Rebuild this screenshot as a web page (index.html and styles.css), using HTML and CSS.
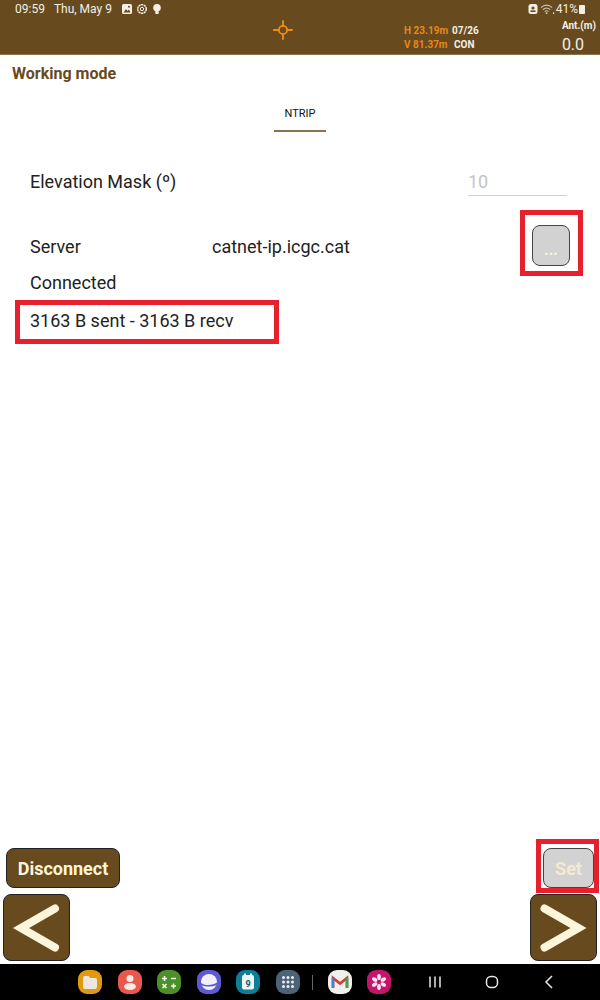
FILE: index.html
```html
<!DOCTYPE html>
<html lang="en">
<head>
    <meta charset="UTF-8">
    <title>Working mode</title>
    <link rel="stylesheet" href="styles.css">
</head>
<body>
    <!-- Top bar with status icons and position info -->
    <div class="top-bar">
        <div class="status-row">
            <span class="clock">09:59</span>
            <span class="date">Thu, May 9</span>
            <svg class="status-icon" viewBox="0 0 12 12"><rect x="1" y="1" width="10" height="10" rx="1.5" fill="#f4efe6"/><path d="M2.5 9.5 L5 6 L6.5 8 L8 6.5 L9.5 9.5Z" fill="#674a1e"/><circle cx="8" cy="3.8" r="1" fill="#674a1e"/></svg>
            <svg class="status-icon" viewBox="0 0 12 12"><circle cx="6" cy="6" r="4.300" fill="none" stroke="#f4efe6" stroke-width="1.500" stroke-dasharray="2.200 .5"/><circle cx="6" cy="6" r="1.700" fill="none" stroke="#f4efe6"/></svg>
            <svg class="status-icon" viewBox="0 0 12 12"><circle cx="6" cy="4.800" r="3.800" fill="#f4efe6"/><rect x="4.300" y="8" width="3.400" height="3" rx=".8" fill="#f4efe6"/></svg>
            <span class="status-right">
                <svg class="status-icon" viewBox="0 0 12 12"><rect x="1.500" y="1" width="9" height="10" rx="2.500" fill="#f4efe6"/><circle cx="6" cy="5" r="1.600" fill="#674a1e"/><rect x="3.500" y="7.400" width="5" height="1.600" fill="#674a1e"/></svg>
                <svg class="wifi-icon" viewBox="0 0 16 12"><path d="M1 4.500 C4.500 1 9.500 1 13 4.500 M3 6.700 C5.500 4.400 8.500 4.400 11 6.700 M5 8.800 C6.300 7.700 7.700 7.700 9 8.800" fill="none" stroke="#cfc5b4" stroke-width="1.100"/><circle cx="7" cy="10.400" r="1" fill="#cfc5b4"/><circle cx="14.500" cy="10.400" r=".8" fill="#f4efe6"/></svg>
                <span class="battery-text">41%</span>
                <span class="battery"></span>
            </span>
        </div>
        <div class="info-row">
            <svg class="crosshair" viewBox="0 0 22 22"><circle cx="11" cy="11" r="4.500" fill="none" stroke="#f08c12" stroke-width="2"/><path d="M11 1V6.500M11 15.500V21M1 11H6.500M15.500 11H21" stroke="#f08c12" stroke-width="2" stroke-linecap="round"/></svg>
            <div class="fix-info">
                <div class="fix-line"><span class="fix-value">H 23.19m</span><span class="fix-sats">07/26</span></div>
                <div class="fix-line"><span class="fix-value">V 81.37m</span><span class="fix-con">CON</span></div>
            </div>
            <div class="antenna">
                <div class="antenna-label">Ant.(m)</div>
                <div class="antenna-value">0.0</div>
            </div>
        </div>
    </div>

    <!-- Main content -->
    <div class="content">
        <h1 class="page-title">Working mode</h1>
        <div class="tabs"><div class="tab">NTRIP</div></div>

        <div class="row elevation-row">
            <span class="label">Elevation Mask (º)</span>
            <div class="field">10</div>
        </div>
        <div class="row server-row">
            <span class="label server-label">Server</span>
            <span class="label">catnet-ip.icgc.cat</span>
            <div class="marked marked-server"><button class="btn-grey btn-dots">...</button></div>
        </div>
        <div class="label connected">Connected</div>
        <div class="marked marked-bytes"><span class="label">3163 B sent - 3163 B recv</span></div>
    </div>

    <!-- Bottom buttons -->
    <div class="actions">
        <button class="btn-brown btn-disconnect">Disconnect</button>
        <div class="marked marked-set"><button class="btn-grey btn-set">Set</button></div>
    </div>
    <div class="arrows">
        <button class="btn-brown btn-arrow"><svg viewBox="0 0 64 64"><path d="M51 12.500 L17 32 L51 51.500" fill="none" stroke="#fdf5d9" stroke-width="8" stroke-linecap="round"/></svg></button>
        <button class="btn-brown btn-arrow"><svg viewBox="0 0 64 64"><path d="M13.500 12.500 L47.500 32 L13.500 51.500" fill="none" stroke="#fdf5d9" stroke-width="8" stroke-linecap="round"/></svg></button>
    </div>

    <!-- Android navigation bar -->
    <div class="nav-bar">
        <div class="dock">
            <svg class="app" viewBox="0 0 24 24"><rect width="24" height="24" rx="9" fill="#e09a12"/><path d="M5 8a2 2 0 0 1 2-2h3.500l2 2H17a2 2 0 0 1 2 2v7a2 2 0 0 1-2 2H7a2 2 0 0 1-2-2Z" fill="#ece8e0"/></svg>
            <svg class="app" viewBox="0 0 24 24"><rect width="24" height="24" rx="9" fill="#e8584c"/><circle cx="12" cy="8.500" r="3.500" fill="#fbe9e6"/><ellipse cx="12" cy="16.500" rx="6" ry="3.500" fill="#fbe9e6"/></svg>
            <svg class="app" viewBox="0 0 24 24"><rect width="24" height="24" rx="9" fill="#4b9128"/><path d="M5 8.500h5M7.500 6v5M14 8.500h5M5.500 14l4 4M9.500 14l-4 4M14 16h5M16.500 13.500v5" stroke="#f2f5ee" stroke-width="1.600" fill="none"/></svg>
            <svg class="app" viewBox="0 0 24 24"><rect width="24" height="24" rx="9" fill="#5f5bcf"/><circle cx="12" cy="12" r="8" fill="#f2f1fb"/><path d="M3 12.500c5 3.500 12 3.500 18-.5-.5 1.500-1 2.500-1.500 3.200-5 2-11 1.800-15.500-.2Z" fill="#5f5bcf"/></svg>
            <svg class="app" viewBox="0 0 24 24"><rect width="24" height="24" rx="9" fill="#0e7f96"/><rect x="6" y="5" width="12" height="14.500" rx="2" fill="#eef6f7"/><rect x="8" y="3.500" width="2" height="3" fill="#eef6f7"/><rect x="14" y="3.500" width="2" height="3" fill="#eef6f7"/><text x="12" y="16.500" class="cal-day" text-anchor="middle">9</text></svg>
            <svg class="app" viewBox="0 0 24 24"><rect width="24" height="24" rx="9" fill="#4c6276"/><g fill="#eef1f4"><circle cx="7.500" cy="7.500" r="1.500"/><circle cx="12" cy="7.500" r="1.500"/><circle cx="16.500" cy="7.500" r="1.500"/><circle cx="7.500" cy="12" r="1.500"/><circle cx="12" cy="12" r="1.500"/><circle cx="16.500" cy="12" r="1.500"/><circle cx="7.500" cy="16.500" r="1.500"/><circle cx="12" cy="16.500" r="1.500"/><circle cx="16.500" cy="16.500" r="1.500"/></g></svg>
            <span class="dock-divider"></span>
            <svg class="app" viewBox="0 0 24 24"><rect width="24" height="24" rx="9" fill="#efefec"/><path d="M5 18V8l7 5.500L19 8v10" fill="none" stroke="#d93a2f" stroke-width="2.600"/><path d="M5 18V8" stroke="#3f7fe0" stroke-width="2.600"/><path d="M19 18V8" stroke="#3aa655" stroke-width="2.600"/></svg>
            <svg class="app" viewBox="0 0 24 24"><rect width="24" height="24" rx="9" fill="#c3156b"/><g fill="#fbe6f0"><ellipse cx="12" cy="7" rx="1.900" ry="3"/><ellipse cx="12" cy="17" rx="1.900" ry="3"/><ellipse cx="7.700" cy="9.500" rx="1.900" ry="3" transform="rotate(-60 7.700 9.500)"/><ellipse cx="16.300" cy="9.500" rx="1.900" ry="3" transform="rotate(60 16.300 9.500)"/><ellipse cx="7.700" cy="14.500" rx="1.900" ry="3" transform="rotate(60 7.700 14.500)"/><ellipse cx="16.300" cy="14.500" rx="1.900" ry="3" transform="rotate(-60 16.300 14.500)"/></g></svg>
        </div>
        <div class="soft-keys">
            <svg class="soft-key" viewBox="0 0 16 16"><path d="M3 2.500V13.500M8 2.500V13.500M13 2.500V13.500" stroke="#e8e8e8" stroke-width="1.500"/></svg>
            <svg class="soft-key" viewBox="0 0 16 16"><rect x="2.500" y="2.500" width="11" height="11" rx="4.500" fill="none" stroke="#e8e8e8" stroke-width="1.500"/></svg>
            <svg class="soft-key" viewBox="0 0 16 16"><path d="M11 2 L5 8 L11 14" fill="none" stroke="#e8e8e8" stroke-width="1.500"/></svg>
        </div>
    </div>
</body>
</html>
```

FILE: styles.css
```css
/* Basic reset */
* {
    margin: 0;
    padding: 0;
    box-sizing: border-box;
}

html, body {
    height: 100%;
    overflow: hidden;
}

body {
    display: flex;
    flex-direction: column;
    background-color: #fff;
    font-family: Roboto, sans-serif;
    color: #222;
}

/* Top bar */
.top-bar {
    height: 55px;
    background-color: #674a1e;
    color: #f4efe6;
    flex-shrink: 0;
    border-bottom: 1px solid #8a744f;
}

.status-row {
    height: 18px;
    display: flex;
    align-items: center;
    padding: 0 4px 0 15px;
    font-size: 12px;
}

.date {
    margin-left: 9px;
    margin-right: 9px;
}

.status-icon {
    width: 12px;
    height: 12px;
    margin-right: 3px;
}

.status-right {
    margin-left: auto;
    display: flex;
    align-items: center;
    padding-right: 11px;
}

.wifi-icon {
    width: 15px;
    height: 12px;
    margin-left: -2px;
    margin-right: 1px;
}

.battery {
    width: 6px;
    height: 9px;
    margin-left: 1px;
    background-color: #f4efe6;
    border-radius: 1px;
}

.info-row {
    display: flex;
    height: 36px;
    padding: 0 4px 0 273px;
}

.crosshair {
    width: 20px;
    height: 20px;
    margin-top: 2px;
}

.fix-info {
    margin-left: 111px;
    padding-top: 6px;
    font-size: 10px;
    font-weight: 700;
}

.fix-line {
    display: flex;
    height: 14px;
    line-height: 14px;
}

.fix-value {
    width: 48px;
    color: #e8871a;
}

.fix-con {
    margin-left: 2px;
}

.antenna {
    margin-left: auto;
}

.antenna-label {
    font-size: 10px;
    font-weight: 700;
    line-height: 14px;
    margin-top: 1px;
    white-space: nowrap;
}

.antenna-value {
    font-size: 16px;
    line-height: 20px;
    margin-top: 2px;
}

/* Content */
.content {
    flex: 1;
    padding-top: 9px;
}

.page-title {
    margin-left: 12px;
    font-size: 16px;
    line-height: 19px;
    font-weight: 700;
    color: #674a1e;
}

.tabs {
    display: flex;
    justify-content: center;
    margin-top: 11px;
}

.tab {
    width: 52px;
    height: 38px;
    padding-top: 13px;
    line-height: 13px;
    font-size: 11px;
    text-align: center;
    color: #111;
    border-bottom: 2px solid #8a744f;
}

.label {
    font-size: 18px;
    line-height: 21px;
    color: #222;
    white-space: nowrap;
}

.row {
    display: flex;
    align-items: center;
    padding-left: 30px;
}

.elevation-row {
    justify-content: space-between;
    padding-right: 33px;
    margin-top: 35px;
}

.field {
    width: 99px;
    height: 29px;
    padding-top: 5px;
    font-size: 18px;
    line-height: 20px;
    color: #c4c4c4;
    border-bottom: 1px solid #cfcfcf;
}

.server-row {
    margin-top: 14px;
}

.server-row .label {
    margin-top: 7px;
}

.server-label {
    width: 182px;
}

.connected {
    margin-left: 30px;
    margin-top: -4px;
}

/* Red annotation frames from the screenshot */
.marked {
    border: 5px solid #e8202e;
}

.marked-server {
    margin-left: auto;
    margin-right: 17px;
    width: 63px;
    height: 66px;
    padding: 10px 0 0 7px;
}

.marked-bytes {
    width: 264px;
    height: 44px;
    margin: 7px 0 0 15px;
    padding: 5px 0 0 10px;
}

.marked-set {
    width: 63px;
    height: 54px;
    padding: 4px 0 0 2px;
}

/* Buttons */
.btn-brown, .btn-grey {
    display: block;
    border: 1.500px solid #222;
    border-radius: 8px;
    font-family: Roboto, sans-serif;
    font-weight: 700;
    color: #fdf5d9;
}

.btn-brown {
    background-color: #674a1e;
}

.btn-grey {
    background-color: #d2d2d2;
    color: #f3ead2;
    border-color: #444;
}

.btn-dots {
    width: 38px;
    height: 41px;
    font-size: 16px;
    padding-top: 7px;
    color: #fbf3dc;
}

.btn-set {
    width: 51px;
    height: 40px;
    font-size: 18px;
}

.actions {
    display: flex;
    justify-content: space-between;
    align-items: flex-start;
    padding: 0 1px 0 6px;
    height: 55px;
    flex-shrink: 0;
}

.btn-disconnect {
    width: 114px;
    height: 40px;
    margin-top: 9px;
    font-size: 18px;
}

.arrows {
    display: flex;
    justify-content: space-between;
    padding: 0 3px;
    height: 70px;
    flex-shrink: 0;
}

.btn-arrow {
    width: 67px;
    height: 67px;
}

.btn-arrow svg {
    display: block;
    width: 64px;
    height: 64px;
}

/* Android navigation bar */
.nav-bar {
    height: 36px;
    background-color: #000;
    display: flex;
    align-items: center;
    flex-shrink: 0;
    padding-left: 78px;
}

.dock {
    display: flex;
    align-items: center;
    gap: 15.500px;
}

.app {
    width: 24px;
    height: 24px;
}

.cal-day {
    font-family: Roboto, sans-serif;
    font-size: 9px;
    font-weight: 700;
    fill: #15566a;
}

.dock-divider {
    width: 1px;
    height: 15px;
    background-color: #666;
    margin: 0 -1px 0 -3px;
}

.soft-keys {
    display: flex;
    align-items: center;
    gap: 41px;
    margin-left: 36px;
}

.soft-key {
    width: 16px;
    height: 16px;
}
```
